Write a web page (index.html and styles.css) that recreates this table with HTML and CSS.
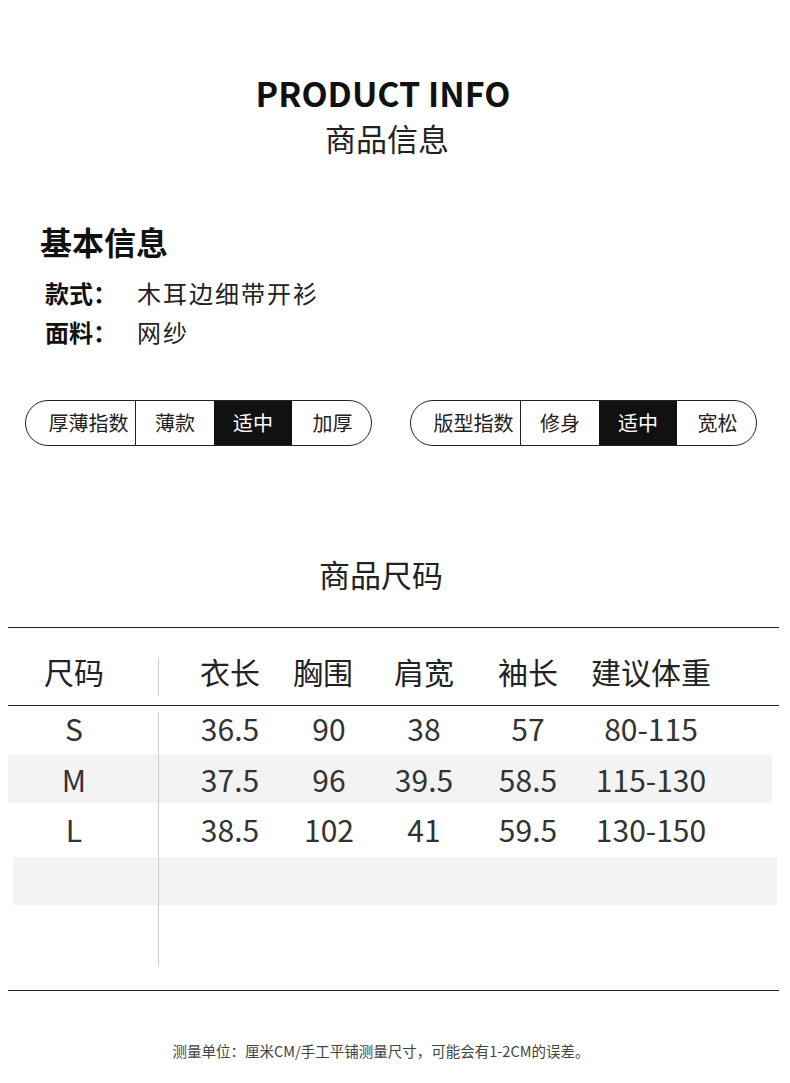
FILE: index.html
```html
<!DOCTYPE html>
<html lang="zh">
<head>
<meta charset="utf-8">
<link rel="stylesheet" href="styles.css">
</head>
<body>
<div class="page">
  <header class="hero">
    <h1 class="hero-en">PRODUCT INFO</h1>
    <div class="hero-cn">商品信息</div>
  </header>

  <section class="basic">
    <h2 class="basic-title">基本信息</h2>
    <div class="basic-row"><span class="basic-label">款式：</span><span class="basic-value">木耳边细带开衫</span></div>
    <div class="basic-row"><span class="basic-label">面料：</span><span class="basic-value">网纱</span></div>
  </section>

  <section class="pills">
    <div class="pill">
      <span class="seg seg-label">厚薄指数</span>
      <span class="seg">薄款</span>
      <span class="seg seg-on">适中</span>
      <span class="seg seg-last">加厚</span>
    </div>
    <div class="pill">
      <span class="seg seg-label">版型指数</span>
      <span class="seg">修身</span>
      <span class="seg seg-on">适中</span>
      <span class="seg seg-last">宽松</span>
    </div>
  </section>

  <h2 class="size-title">商品尺码</h2>

  <section class="size-table">
    <div class="thead">
      <div class="row head-row">
        <span class="c c1">尺码</span>
        <span class="c sep"></span>
        <span class="c">衣长</span>
        <span class="c">胸围</span>
        <span class="c">肩宽</span>
        <span class="c">袖长</span>
        <span class="c">建议体重</span>
      </div>
    </div>
    <div class="tbody">
      <div class="row r-s">
        <span class="c c1">S</span><span class="c sep"></span>
        <span class="c">36.5</span><span class="c c-chest">90</span><span class="c">38</span><span class="c">57</span><span class="c">80-115</span>
      </div>
      <div class="row r-m shade">
        <span class="c c1">M</span><span class="c sep"></span>
        <span class="c">37.5</span><span class="c c-chest">96</span><span class="c">39.5</span><span class="c">58.5</span><span class="c">115-130</span>
      </div>
      <div class="row r-l">
        <span class="c c1">L</span><span class="c sep"></span>
        <span class="c">38.5</span><span class="c c-chest">102</span><span class="c">41</span><span class="c">59.5</span><span class="c">130-150</span>
      </div>
      <div class="row r-empty shade2"></div>
      <div class="row r-empty2"></div>
    </div>
  </section>

  <p class="note">测量单位：厘米CM/手工平铺测量尺寸，可能会有1-2CM的误差。</p>
</div>
</body>
</html>
```

FILE: styles.css
```css
* { box-sizing: border-box; margin: 0; padding: 0; }

html, body {
  background: #ffffff;
}

body {
  font-family: "Noto Sans CJK SC", "Noto Sans", sans-serif;
  color: #222;
  width: 790px;
}

.page {
  display: flex;
  flex-direction: column;
}

/* hero */
.hero {
  display: flex;
  flex-direction: column;
  align-items: center;
  padding-top: 73px;
}
.hero-en {
  font-size: 34px;
  font-weight: 700;
  line-height: 40px;
  color: #111;
  padding-right: 24px;
}
.hero-cn {
  font-size: 31px;
  font-weight: 400;
  line-height: 40px;
  margin-top: 5px;
  color: #222;
  padding-right: 16px;
}

/* basic info */
.basic {
  padding-left: 40px;
  margin-top: 63px;
}
.basic-title {
  font-size: 32px;
  font-weight: 700;
  line-height: 40px;
  color: #111;
  margin-bottom: 12px;
}
.basic-row {
  display: flex;
  align-items: center;
  height: 39px;
  padding-left: 5px;
  font-size: 24px;
}
.basic-label {
  width: 92px;
  font-weight: 700;
  color: #111;
}
.basic-value {
  font-weight: 400;
  color: #222;
  letter-spacing: 2px;
}

/* pills */
.pills {
  display: flex;
  gap: 38px;
  padding-left: 25px;
  margin-top: 49px;
}
.pill {
  display: flex;
  width: 347px;
  height: 46px;
  border: 1px solid #222;
  border-radius: 23px;
  overflow: hidden;
}
.seg {
  display: flex;
  align-items: center;
  justify-content: center;
  width: 78px;
  font-size: 20px;
  color: #222;
  line-height: 1;
}
.seg-label {
  width: 110px;
  padding-left: 16px;
  border-right: 1px solid #222;
}
.seg-on {
  background: #111;
  color: #fff;
}
.seg-last {
  flex: 1;
  padding-left: 2px;
}

/* size title */
.size-title {
  text-align: center;
  font-size: 31px;
  font-weight: 400;
  line-height: 40px;
  color: #222;
  margin-top: 108px;
  padding-right: 28px;
}

/* table */
.size-table {
  margin: 33px 11px 0 8px;
  border-bottom: 1px solid #222;
}
.thead {
  border-top: 1px solid #222;
  border-bottom: 1px solid #222;
  height: 79px;
}
.row {
  display: grid;
  grid-template-columns: 132px 42px 96px 94px 104px 104px 142px;
  align-items: center;
}
.c {
  text-align: center;
  white-space: nowrap;
}
.head-row {
  height: 78px;
  font-size: 30px;
  color: #222;
  padding-top: 8px;
}
.head-row .sep {
  height: 39px;
  border-left: 1px solid #cfcfcf;
  margin-left: 18px;
  align-self: center;
  margin-top: 10px;
}
.head-row .c:nth-child(4) {
  padding-right: 4px;
}
.tbody {
  position: relative;
  padding-bottom: 23px;
}
.tbody::before {
  content: "";
  position: absolute;
  left: 150px;
  top: 6px;
  height: 255px;
  border-left: 1px solid #cfcfcf;
}
.tbody .row {
  font-size: 30px;
  color: #333;
}
.c-chest {
  padding-left: 8px;
}
.r-s { height: 49px; padding-bottom: 5px; }
.r-m { height: 48px; padding-bottom: 1px; }
.r-l { height: 54px; padding-bottom: 3px; }
.shade {
  background: #f3f3f3;
  margin-right: 7px;
}
.r-empty {
  height: 48px;
}
.shade2 {
  background: #f3f3f3;
  margin-left: 5px;
  margin-right: 2px;
}
.r-empty2 {
  height: 62px;
}

/* note */
.note {
  text-align: center;
  font-size: 14.5px;
  line-height: 20px;
  color: #444;
  margin-top: 50px;
  padding-right: 28px;
}
```
